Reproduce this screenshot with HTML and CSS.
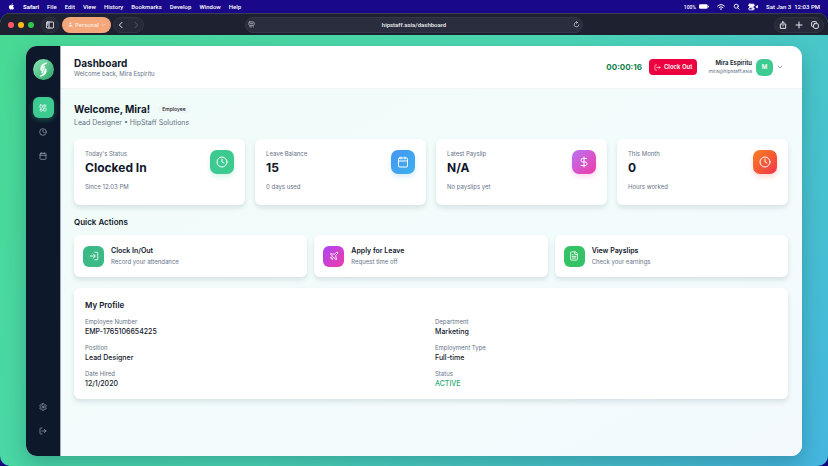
FILE: index.html
```html
<!DOCTYPE html>
<html lang="en">
<head>
    <meta charset="UTF-8">
    <meta name="viewport" content="width=device-width, initial-scale=1.0">
    <title>HipStaff Dashboard</title>
    <link rel="stylesheet" href="styles.css">
</head>
<body>
    <!-- Icons shared by more than one button or card -->
    <svg class="sprite" aria-hidden="true">
        <symbol id="i-clock" viewBox="0 0 24 24"><circle cx="12" cy="12" r="10"/><path d="M12 6v6l4 2"/></symbol>
        <symbol id="i-calendar" viewBox="0 0 24 24"><path d="M8 2v4M16 2v4M3 10h18"/><rect x="3" y="4" width="18" height="18" rx="2"/></symbol>
        <symbol id="i-logout" viewBox="0 0 24 24"><path d="M9 21H5a2 2 0 0 1-2-2V5a2 2 0 0 1 2-2h4M16 17l5-5-5-5M21 12H9"/></symbol>
    </svg>

    <header class="menubar">
        <nav class="menu-left">
            <svg class="apple" viewBox="0 0 24 24"><path d="M16.500 1c.2 2.400-1.800 4.600-4.200 4.700C12 3.400 14 1.200 16.500 1zM20 8.200c-3.500 2-3 6.700.7 8-1 3-2.900 6.300-5 6.300-1.400 0-1.900-.9-3.600-.9s-2.300.9-3.600.9C5.700 22.500 3 17.200 3 13.200c0-4.400 2.700-6.700 5.300-6.700 1.600 0 2.800 1 3.900 1 1 0 2.500-1.100 4.400-1.100 1.400 0 2.600.7 3.400 1.800z"/></svg>
            <b>Safari</b>
            <span>File</span>
            <span>Edit</span>
            <span>View</span>
            <span>History</span>
            <span>Bookmarks</span>
            <span>Develop</span>
            <span>Window</span>
            <span>Help</span>
        </nav>
        <div class="menu-right">
            <span class="battery">100% <svg viewBox="0 0 22 14"><rect x="0" y="2" width="19" height="10" rx="3"/><rect x="20" y="5" width="2" height="4" rx="1"/></svg></span>
            <svg class="icon" viewBox="0 0 24 24"><path d="M2 9a15 15 0 0 1 20 0M6 13.500a9 9 0 0 1 12 0M10 18a3.500 3.500 0 0 1 4 0"/></svg>
            <svg class="icon search" viewBox="0 0 24 24"><circle cx="11" cy="11" r="7"/><path d="M21 21l-5-5"/></svg>
            <svg class="icon control" viewBox="0 0 32 24"><rect x="2" y="3" width="18" height="7" rx="3.500" fill="currentColor"/><rect x="2" y="14" width="18" height="7" rx="3.500"/><circle cx="15" cy="17.500" r="2"/><path d="M31 8l-6 3 4 3z" fill="currentColor"/></svg>
            <span class="date">Sat Jan 3&nbsp; 12:03 PM</span>
        </div>
    </header>

    <div class="browser">
        <div class="toolbar">
            <div class="tools">
                <span class="lights"><i class="red"></i><i class="yellow"></i><i class="green"></i></span>
                <button class="pill sidebar-toggle" aria-label="Show sidebar"><svg class="icon" viewBox="0 0 24 24"><rect x="1" y="3" width="22" height="18" rx="3"/><path d="M9 3v18M4.500 8h1M4.500 12h1"/></svg></button>
                <button class="profile-pill">
                    <svg viewBox="0 0 24 24"><circle cx="12" cy="7" r="5"/><path d="M2 22c0-6 4-8 10-8s10 2 10 8z"/></svg>
                    Personal
                    <svg class="line" viewBox="0 0 24 24"><path d="M5 9l7 7 7-7"/></svg>
                </button>
                <span class="pill history">
                    <button aria-label="Back"><svg class="icon" viewBox="0 0 24 24"><path d="M15 4l-8 8 8 8"/></svg></button>
                    <button aria-label="Forward" disabled><svg class="icon" viewBox="0 0 24 24"><path d="M9 4l8 8-8 8"/></svg></button>
                </span>
            </div>
            <div class="address">
                <svg class="icon" viewBox="0 0 24 24"><rect x="3" y="3" width="18" height="12" rx="3"/><path d="M8 9h8M6 20h7M18 20h1"/></svg>
                <input type="text" value="hipstaff.asia/dashboard" aria-label="Address">
                <button aria-label="Reload"><svg class="icon" viewBox="0 0 24 24"><path d="M20 13a8 8 0 1 1-5-8M11 1l4.500 4-4 4.500"/></svg></button>
            </div>
            <div class="tools tools-right">
                <span class="pill actions">
                    <button aria-label="Share"><svg class="icon" viewBox="0 0 24 24"><path d="M8 9H4v13h16V9h-4M12 15V2M8 6l4-4 4 4"/></svg></button>
                    <button aria-label="New tab"><svg class="icon" viewBox="0 0 24 24"><path d="M12 3v18M3 12h18"/></svg></button>
                    <button aria-label="Tab overview"><svg class="icon" viewBox="0 0 24 24"><rect x="8" y="8" width="14" height="14" rx="3"/><path d="M4 17a2 2 0 0 1-2-2V5a3 3 0 0 1 3-3h10a2 2 0 0 1 2 2"/></svg></button>
                </span>
            </div>
        </div>

        <div class="page">
            <div class="app">
                <aside class="sidebar">
                    <svg class="logo" viewBox="0 0 40 40">
                        <defs>
                            <linearGradient id="logo-fill" x1="0" y1="0" x2="1" y2="1">
                                <stop offset="0" stop-color="#8ee8b5"/>
                                <stop offset="1" stop-color="#2aa56c"/>
                            </linearGradient>
                        </defs>
                        <circle cx="20" cy="20" r="20" fill="url(#logo-fill)"/>
                        <path d="M27 6c-8 1-12 5-13 11-.5 3 0 5 3 6l3-9c1-3 3-4 6-5z" fill="#f1fff7"/>
                        <path d="M13 34c8-1 12-5 13-11 .5-3 0-5-3-6l-3 9c-1 3-3 4-6 5z" fill="#f1fff7"/>
                        <path d="M22 13l-5 14" stroke="#f1fff7" stroke-width="3"/>
                    </svg>
                    <nav class="side-nav">
                        <a href="#" class="side-link active" aria-label="Dashboard"><svg class="icon" viewBox="0 0 24 24"><rect x="3" y="3" width="7" height="9" rx="1"/><rect x="14" y="3" width="7" height="5" rx="1"/><rect x="14" y="12" width="7" height="9" rx="1"/><rect x="3" y="16" width="7" height="5" rx="1"/></svg></a>
                        <a href="#" class="side-link" aria-label="Attendance"><svg class="icon"><use href="#i-clock"/></svg></a>
                        <a href="#" class="side-link" aria-label="Leave"><svg class="icon"><use href="#i-calendar"/></svg></a>
                    </nav>
                    <nav class="side-nav side-bottom">
                        <a href="#" class="side-link" aria-label="Settings"><svg class="icon" viewBox="0 0 24 24"><path d="M10 2h4l.8 3 2.200 1.200 3-.8 2 3.400L20 11v2l2 2.200-2 3.400-3-.8-2.200 1.200L14 22h-4l-.8-3L7 17.800l-3 .8-2-3.400L4 13v-2L2 8.800l2-3.400 3 .8L9.200 5z"/><circle cx="12" cy="12" r="3"/></svg></a>
                        <a href="#" class="side-link" aria-label="Log out"><svg class="icon"><use href="#i-logout"/></svg></a>
                    </nav>
                </aside>

                <div class="main">
                    <header class="topbar">
                        <div>
                            <h1>Dashboard</h1>
                            <p class="muted">Welcome back, Mira Espiritu</p>
                        </div>
                        <div class="topbar-right">
                            <span class="timer">00:00:16</span>
                            <button class="clock-out"><svg class="icon"><use href="#i-logout"/></svg>Clock Out</button>
                            <button class="user">
                                <span class="user-text">
                                    <span class="user-name">Mira Espiritu</span>
                                    <span class="user-email">mira@hipstaff.asia</span>
                                </span>
                                <span class="avatar">M</span>
                                <svg class="icon chevron" viewBox="0 0 24 24"><path d="M4 8l8 8 8-8"/></svg>
                            </button>
                        </div>
                    </header>

                    <main class="content">
                        <section class="welcome">
                            <div class="welcome-title">
                                <h2>Welcome, Mira!</h2>
                                <span class="badge">Employee</span>
                            </div>
                            <p>Lead Designer • HipStaff Solutions</p>
                        </section>

                        <section class="stats">
                            <div class="card stat">
                                <div>
                                    <p class="muted">Today's Status</p>
                                    <p class="stat-value">Clocked In</p>
                                    <p class="muted">Since 12:03 PM</p>
                                </div>
                                <span class="tile green-tile"><svg class="icon"><use href="#i-clock"/></svg></span>
                            </div>
                            <div class="card stat">
                                <div>
                                    <p class="muted">Leave Balance</p>
                                    <p class="stat-value">15</p>
                                    <p class="muted">0 days used</p>
                                </div>
                                <span class="tile blue-tile"><svg class="icon"><use href="#i-calendar"/></svg></span>
                            </div>
                            <div class="card stat">
                                <div>
                                    <p class="muted">Latest Payslip</p>
                                    <p class="stat-value">N/A</p>
                                    <p class="muted">No payslips yet</p>
                                </div>
                                <span class="tile pink-tile"><svg class="icon" viewBox="0 0 24 24"><path d="M12 2v20M17 5H9.500a3.500 3.500 0 0 0 0 7h5a3.500 3.500 0 0 1 0 7H6"/></svg></span>
                            </div>
                            <div class="card stat">
                                <div>
                                    <p class="muted">This Month</p>
                                    <p class="stat-value">0</p>
                                    <p class="muted">Hours worked</p>
                                </div>
                                <span class="tile orange-tile"><svg class="icon"><use href="#i-clock"/></svg></span>
                            </div>
                        </section>

                        <section class="quick">
                            <h3>Quick Actions</h3>
                            <div class="quick-grid">
                                <button class="card action">
                                    <span class="tile small-tile teal-tile"><svg class="icon" viewBox="0 0 24 24"><path d="M14 3h5a2 2 0 0 1 2 2v14a2 2 0 0 1-2 2h-5M10 17l5-5-5-5M15 12H3"/></svg></span>
                                    <span>
                                        <strong>Clock In/Out</strong>
                                        <span class="muted">Record your attendance</span>
                                    </span>
                                </button>
                                <button class="card action">
                                    <span class="tile small-tile purple-tile"><svg class="icon" viewBox="0 0 24 24"><path d="M17.800 19.200L16 11l3.500-3.500C21 6 21.500 4 21 3c-1-.5-3 0-4.500 1.500L13 8 4.800 6.200c-.5-.1-.9.1-1.100.5l-.3.5c-.2.5-.1 1 .3 1.300L9 12l-2 3H4l-1 1 3 2 2 3 1-1v-3l3-2 3.500 5.300c.3.4.8.5 1.300.3l.5-.2c.4-.3.6-.7.5-1.200z"/></svg></span>
                                    <span>
                                        <strong>Apply for Leave</strong>
                                        <span class="muted">Request time off</span>
                                    </span>
                                </button>
                                <button class="card action">
                                    <span class="tile small-tile lime-tile"><svg class="icon" viewBox="0 0 24 24"><path d="M15 2H6a2 2 0 0 0-2 2v16a2 2 0 0 0 2 2h12a2 2 0 0 0 2-2V7zM14 2v6h6M8 9h2M8 13h8M8 17h8"/></svg></span>
                                    <span>
                                        <strong>View Payslips</strong>
                                        <span class="muted">Check your earnings</span>
                                    </span>
                                </button>
                            </div>
                        </section>

                        <section class="card profile">
                            <h3>My Profile</h3>
                            <dl>
                                <div>
                                    <dt>Employee Number</dt>
                                    <dd>EMP-1765106654225</dd>
                                </div>
                                <div>
                                    <dt>Department</dt>
                                    <dd>Marketing</dd>
                                </div>
                                <div>
                                    <dt>Position</dt>
                                    <dd>Lead Designer</dd>
                                </div>
                                <div>
                                    <dt>Employment Type</dt>
                                    <dd>Full-time</dd>
                                </div>
                                <div>
                                    <dt>Date Hired</dt>
                                    <dd>12/1/2020</dd>
                                </div>
                                <div>
                                    <dt>Status</dt>
                                    <dd class="status">ACTIVE</dd>
                                </div>
                            </dl>
                        </section>
                    </main>
                </div>
            </div>
        </div>
    </div>
</body>
</html>
```
FILE: styles.css
```css
:root {
    --text: #10172a;
    --muted: #667287;
    --green: #3ecb92;
    --navy: #0d182a;
}
* {
    margin: 0;
    padding: 0;
    box-sizing: border-box;
}
body {
    font-family: Inter, sans-serif;
    font-size: 6px;
    line-height: 8px;
    color: var(--text);
    background: #16077f;
    min-height: 100vh;
    display: flex;
    flex-direction: column;
}
button {
    font: inherit;
    color: inherit;
    background: none;
    border: none;
    cursor: pointer;
}
svg {
    display: block;
    flex: none;
}
.sprite {
    position: absolute;
    width: 0;
    height: 0;
}
.icon {
    width: 8px;
    height: 8px;
    fill: none;
    stroke: currentColor;
    stroke-width: 2;
    stroke-linecap: round;
    stroke-linejoin: round;
}

/* menu bar */
.menubar {
    height: 13px;
    padding: 0 8px;
    display: flex;
    justify-content: space-between;
    align-items: center;
    background: #190889;
    color: #fff;
    font-family: Roboto, sans-serif;
    font-weight: 500;
}
.menu-left, .menu-right {
    display: flex;
    align-items: center;
    gap: 8px;
}
.menu-right .icon {
    stroke-width: 3;
}
.apple {
    width: 7px;
    height: 7px;
    fill: #fff;
}
.battery {
    display: flex;
    align-items: center;
    gap: 3px;
    font-size: 5px;
}
.battery svg {
    width: 10px;
    height: 7px;
    fill: #fff;
}
.menu-right .search {
    width: 7px;
    height: 7px;
}
.control {
    width: 10px;
}

/* browser */
.browser {
    flex: 1;
    display: flex;
    flex-direction: column;
    border-radius: 10px;
    overflow: hidden;
    background: linear-gradient(125deg, #48d993 0%, #4bd6b4 50%, #45b5df 100%);
}
.toolbar {
    height: 22px;
    display: grid;
    grid-template-columns: 8fr 11fr 8fr;
    align-items: center;
    background: #1d2130;
    border-top: 1px solid #3b3e52;
    color: #e6e7ec;
}
.toolbar .icon {
    stroke-width: 3;
}
.tools {
    display: flex;
    align-items: center;
    padding: 0 4px 0 8px;
}
.tools-right {
    justify-content: flex-end;
}
.lights {
    display: flex;
    gap: 4px;
    margin-right: 7px;
}
.lights i {
    width: 6px;
    height: 6px;
    border-radius: 50%;
}
.red {
    background: #ff5a5f;
}
.yellow {
    background: #fdbc14;
}
.green {
    background: #2fc84b;
}
.pill {
    height: 16px;
    border-radius: 8px;
    background: #262a38;
    border: 1px solid #303443;
    display: flex;
    align-items: center;
}
.sidebar-toggle {
    padding: 0 4px;
    margin-right: 3px;
}
.profile-pill {
    height: 16px;
    padding: 0 5px 0 6px;
    margin-right: 2px;
    border-radius: 8px;
    background: #f3a77b;
    color: #ffeadc;
    display: flex;
    align-items: center;
    gap: 2px;
    font-family: Roboto, sans-serif;
    font-weight: 500;
}
.profile-pill svg {
    width: 5px;
    height: 5px;
    fill: #ffeadc;
}
.profile-pill .line {
    fill: none;
    stroke: #ffeadc;
    stroke-width: 3;
}
.history {
    padding: 0 3px;
    gap: 7px;
}
.history button:disabled {
    color: #555a68;
}
.address {
    height: 16px;
    padding: 0 2px;
    border-radius: 8px;
    background: #2a2d3d;
    border: 1px solid #343748;
    display: flex;
    align-items: center;
}
.address input {
    flex: 1;
    min-width: 0;
    background: none;
    border: none;
    outline: none;
    text-align: center;
    color: #eeeff3;
    font: 500 6px/8px Roboto, sans-serif;
}
.address .icon {
    width: 7px;
    height: 7px;
    stroke-width: 2;
}
.actions {
    padding: 0 4px;
    gap: 8px;
}

/* app window */
.page {
    flex: 1;
    display: flex;
    padding: 11px 26px 10px;
}
.app {
    flex: 1;
    display: flex;
    border-radius: 11px;
    overflow: hidden;
    background: #fff;
    box-shadow: 0 8px 20px rgba(0, 40, 60, 0.25);
}
.sidebar {
    width: 35px;
    padding: 13px 6px 15px;
    display: flex;
    flex-direction: column;
    align-items: center;
    background: var(--navy);
    border-right: 1px solid #a4a9b5;
}
.logo {
    width: 21px;
    height: 21px;
}
.side-nav {
    margin-top: 17px;
    display: flex;
    flex-direction: column;
    gap: 3px;
}
.side-bottom {
    margin-top: auto;
}
.side-link {
    width: 21px;
    height: 21px;
    border-radius: 6px;
    display: flex;
    align-items: center;
    justify-content: center;
    color: #a3adbc;
}
.side-link.active {
    background: var(--green);
    color: #fff;
    box-shadow: 0 2px 5px rgba(62, 203, 146, 0.3);
}
.main {
    flex: 1;
    min-width: 0;
    display: flex;
    flex-direction: column;
}
.topbar {
    height: 43px;
    padding: 0 19px 0 13px;
    display: flex;
    justify-content: space-between;
    align-items: center;
    border-bottom: 1px solid #eef3f4;
}
h1, h2 {
    font-size: 10px;
    line-height: 14px;
    font-weight: 700;
}
h3 {
    font-size: 8px;
    line-height: 12px;
    font-weight: 600;
}
.muted, dt {
    color: var(--muted);
}
.topbar-right, .user {
    display: flex;
    align-items: center;
}
.timer {
    margin-right: 7px;
    font-size: 8px;
    font-weight: 700;
    color: #13804e;
}
.clock-out {
    height: 16px;
    padding: 0 5px;
    margin-right: 11px;
    border-radius: 4px;
    background: #ec003f;
    color: #fff;
    font-weight: 600;
    display: flex;
    align-items: center;
    gap: 3px;
}
.clock-out .icon {
    width: 7px;
    height: 7px;
}
.user {
    gap: 4px;
    text-align: right;
}
.user-name, .user-email {
    display: block;
}
.user-name {
    font-weight: 600;
}
.user-email {
    font-size: 5px;
    color: var(--muted);
}
.avatar {
    width: 17px;
    height: 17px;
    border-radius: 6px;
    background: var(--green);
    color: #fff;
    font-weight: 600;
    display: flex;
    align-items: center;
    justify-content: center;
}
.chevron {
    width: 6px;
    height: 6px;
    color: #7d8696;
    stroke-width: 3;
}

/* content */
.content {
    flex: 1;
    padding: 13px 14px 14px 13px;
    background: linear-gradient(150deg, #f0fcf8 0%, #f3fcfd 60%, #f3f9fd 100%);
}
.welcome {
    margin-bottom: 9px;
}
.welcome-title {
    display: flex;
    align-items: center;
    gap: 8px;
}
.welcome p {
    font-size: 7px;
    line-height: 14px;
    color: var(--muted);
}
.badge {
    padding: 0 4px;
    border-radius: 5px;
    background: #f0f5f5;
    font-size: 5px;
    font-weight: 500;
}
.card {
    background: #fff;
    border-radius: 6px;
    box-shadow: 0 3px 5px rgba(20, 50, 60, 0.12);
}
.stats {
    display: grid;
    grid-template-columns: repeat(4, 1fr);
    gap: 10px;
    margin-bottom: 11px;
}
.stat {
    padding: 11px 11px 14px;
    display: flex;
    justify-content: space-between;
    align-items: flex-start;
}
.stat-value {
    margin-bottom: 6px;
    font-size: 12px;
    line-height: 19px;
    font-weight: 700;
}
.tile {
    width: 24px;
    height: 24px;
    border-radius: 7px;
    display: flex;
    align-items: center;
    justify-content: center;
    color: #fff;
}
.tile .icon {
    width: 12px;
    height: 12px;
}
.small-tile {
    width: 21px;
    height: 21px;
    border-radius: 6px;
}
.small-tile .icon {
    width: 10px;
    height: 10px;
}
.green-tile {
    background: #3dca91;
    box-shadow: 0 3px 5px rgba(61, 202, 145, 0.2);
}
.blue-tile {
    background: linear-gradient(135deg, #4896f2, #3bb0ee);
    box-shadow: 0 3px 5px rgba(67, 164, 242, 0.2);
}
.pink-tile {
    background: linear-gradient(135deg, #b973f5, #f13ba6);
    box-shadow: 0 3px 5px rgba(220, 80, 200, 0.2);
}
.orange-tile {
    background: linear-gradient(135deg, #f5811f, #f5354c);
    box-shadow: 0 3px 5px rgba(245, 80, 50, 0.2);
}
.teal-tile {
    background: #3bba88;
}
.purple-tile {
    background: linear-gradient(135deg, #ac46f4, #f03aa9);
}
.lime-tile {
    background: #35c266;
}
.quick {
    margin-bottom: 11px;
}
.quick-grid {
    margin-top: 7px;
    display: grid;
    grid-template-columns: repeat(3, 1fr);
    gap: 7px;
}
.action {
    padding: 10px 9px;
    display: flex;
    align-items: center;
    gap: 7px;
    text-align: left;
}
.action strong, .action .muted {
    display: block;
    line-height: 11px;
}
.action strong {
    font-size: 7px;
    font-weight: 600;
}
.profile {
    padding: 11px 11px 9px;
}
.profile dl {
    margin-top: 7px;
    display: grid;
    grid-template-columns: 1fr 1fr;
    gap: 6px 8px;
}
dd {
    font-size: 7px;
    line-height: 12px;
    font-weight: 500;
}
.status {
    color: #2aaa76;
}
```
